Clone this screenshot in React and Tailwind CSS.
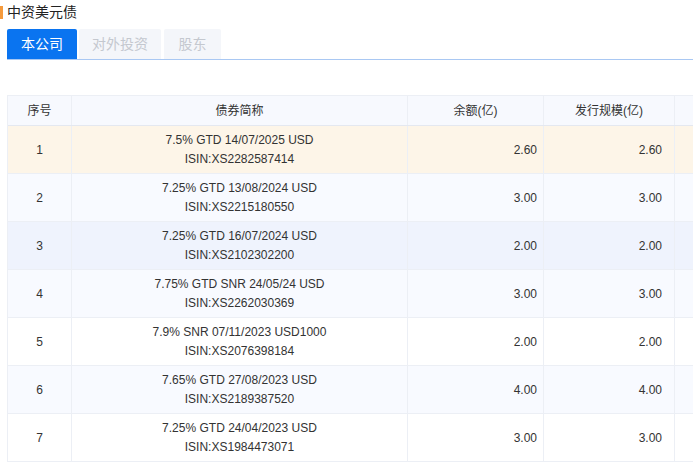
export default function App() {
  const rows = [
    ["7.5% GTD 14/07/2025 USD", "XS2282587414", "2.60", "2.60", "bg-[#fdf5e8]"],
    ["7.25% GTD 13/08/2024 USD", "XS2215180550", "3.00", "3.00", "bg-[#f8faff]"],
    ["7.25% GTD 16/07/2024 USD", "XS2102302200", "2.00", "2.00", "bg-[#eff3fd]"],
    ["7.75% GTD SNR 24/05/24 USD", "XS2262030369", "3.00", "3.00", "bg-[#f8faff]"],
    ["7.9% SNR 07/11/2023 USD1000", "XS2076398184", "2.00", "2.00", "bg-white"],
    ["7.65% GTD 27/08/2023 USD", "XS2189387520", "4.00", "4.00", "bg-[#f8faff]"],
    ["7.25% GTD 24/04/2023 USD", "XS1984473071", "3.00", "3.00", "bg-white"],
  ];
  return (
    <div className="w-[693px] h-[475px] overflow-hidden bg-white text-[#333] text-[12px]" style={{ fontFamily: '"Liberation Sans", "Noto Sans CJK SC", sans-serif' }}>
      <div className="flex items-center h-[23px] pt-[1px]">
        <div className="w-[3px] h-[13px] bg-[#f59a3c]"></div>
        <div className="ml-[4px] text-[14px] text-[#222]">中资美元债</div>
      </div>
      <div className="ml-[7px] mt-[6px] flex gap-[2px] border-b border-[#a9c8f3] h-[31px]">
        <div className="w-[70px] bg-[#0a74f0] text-white text-[14px] flex items-center justify-center rounded-t-[2px]">本公司</div>
        <div className="w-[82px] bg-[#f4f6fa] text-[#c4c8cf] text-[14px] flex items-center justify-center rounded-t-[2px]">对外投资</div>
        <div className="w-[57px] bg-[#f4f6fa] text-[#c4c8cf] text-[14px] flex items-center justify-center rounded-t-[2px] ml-[1px]">股东</div>
      </div>
      <div className="ml-[7px] mt-[35px] border-l border-t border-[#eceff5]">
        <div className="flex h-[30px] bg-[#f7f9fe] border-b border-[#e4e8f0]">
          <div className="w-[64px] border-r border-[#eceff5] flex items-center justify-center">序号</div>
          <div className="w-[336px] border-r border-[#eceff5] flex items-center justify-center">债券简称</div>
          <div className="w-[136px] border-r border-[#eceff5] flex items-center justify-center">余额(亿)</div>
          <div className="w-[131px] border-r border-[#eceff5] flex items-center justify-center">发行规模(亿)</div>
          <div className="flex-1"></div>
        </div>
        {rows.map((r, i) => (
          <div key={i} className={`flex h-[48px] border-b border-[#eceff5] ${r[4]}`}>
            <div className="w-[64px] border-r border-[#eceff5] flex items-center justify-center">{i + 1}</div>
            <div className="w-[336px] border-r border-[#eceff5] flex flex-col items-center justify-center leading-[19px]">
              <div>{r[0]}</div>
              <div>ISIN:{r[1]}</div>
            </div>
            <div className="w-[136px] border-r border-[#eceff5] flex items-center justify-end pr-[6px]">{r[2]}</div>
            <div className="w-[131px] border-r border-[#eceff5] flex items-center justify-end pr-[12px]">{r[3]}</div>
            <div className="flex-1"></div>
          </div>
        ))}
      </div>
    </div>
  );
}
